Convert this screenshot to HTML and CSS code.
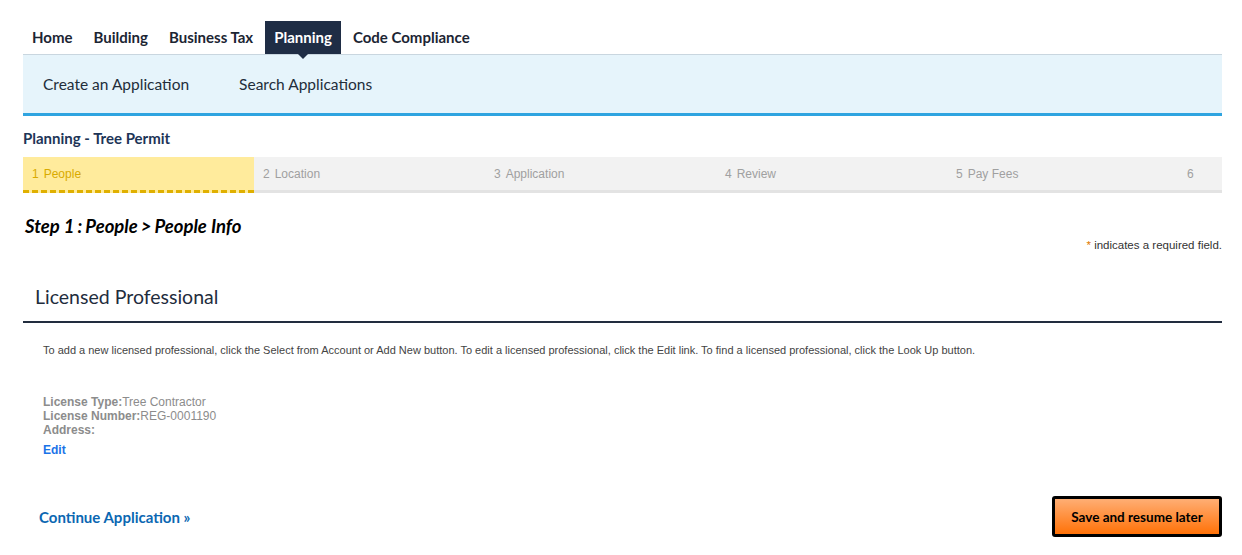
FILE: index.html
```html
<!DOCTYPE html>
<html lang="en">
<head>
  <meta charset="UTF-8" />
  <title>Planning - Tree Permit</title>
  <link rel="stylesheet" href="styles.css">
</head>
<body>
  <div class="page">

    <nav class="tabs">
      <a class="tab">Home</a>
      <a class="tab">Building</a>
      <a class="tab">Business Tax</a>
      <a class="tab active">Planning</a>
      <a class="tab">Code Compliance</a>
    </nav>

    <div class="submenu">
      <a>Create an Application</a>
      <a>Search Applications</a>
    </div>

    <h1 class="module-title">Planning - Tree Permit</h1>

    <ol class="steps">
      <li class="step current"><span>1</span>People</li>
      <li class="step"><span>2</span>Location</li>
      <li class="step"><span>3</span>Application</li>
      <li class="step"><span>4</span>Review</li>
      <li class="step"><span>5</span>Pay Fees</li>
      <li class="step last"><span>6</span></li>
    </ol>

    <h2 class="step-title">Step 1<span class="sep">:</span>People<span class="sep">&gt;</span>People Info</h2>
    <p class="required-note"><span class="star">*</span> indicates a required field.</p>

    <section class="section">
      <h3 class="section-title">Licensed Professional</h3>
      <p class="instructions">To add a new licensed professional, click the Select from Account or Add New button. To edit a licensed professional, click the Edit link. To find a licensed professional, click the Look Up button.</p>

      <div class="license">
        <div><b>License Type:</b>Tree Contractor</div>
        <div><b>License Number:</b>REG-0001190</div>
        <div><b>Address:</b></div>
      </div>
      <a class="edit-link">Edit</a>
    </section>

    <div class="actions">
      <a class="continue">Continue Application &raquo;</a>
      <button class="save-btn">Save and resume later</button>
    </div>

  </div>
</body>
</html>
```

FILE: styles.css
```css
body {
  margin: 0;
  background: #fff;
  font-family: Lato, "Open Sans", sans-serif;
  color: #222d3a;
}
.page {
  width: 1199px;
  margin-left: 23px;
}
.tabs {
  display: flex;
  margin-top: 21px;
  height: 33px;
}
.tab {
  display: flex;
  align-items: center;
  padding: 0 9px 2px 9px;
  margin-right: 3px;
  font-size: 15px;
  font-weight: bold;
  color: #1c2533;
  position: relative;
}
.tab.active {
  background: #1f2d45;
  color: #fff;
}
.tab.active::after {
  content: '';
  position: absolute;
  left: 50%;
  bottom: -5px;
  margin-left: -5px;
  border-left: 5px solid transparent;
  border-right: 5px solid transparent;
  border-top: 5px solid #1f2d45;
}
.submenu {
  display: flex;
  gap: 50px;
  align-items: center;
  height: 58px;
  padding-left: 20px;
  background: #e6f4fb;
  border-top: 1px solid #c9d6df;
  border-bottom: 3px solid #2fa4e0;
}
.submenu a {
  font-size: 15.5px;
  color: #222d3a;
}
.module-title {
  margin: 13px 0 10px 0;
  font-size: 15px;
  font-weight: bold;
  color: #1d3557;
}
.steps {
  display: flex;
  list-style: none;
  margin: 0;
  padding: 0;
  background: #f2f2f2;
  font-family: "Liberation Sans", Arial, sans-serif;
  font-size: 12px;
  color: #a0a0a0;
}
.step {
  width: 231px;
  height: 36px;
  line-height: 34px;
  padding-left: 9px;
  box-sizing: border-box;
  border-bottom: 3px solid #e3e3e3;
  flex-shrink: 0;
}
.step span {
  margin-right: 5px;
}
.step.current {
  background: #ffeb9c;
  color: #d9aa00;
  border-bottom: 3px dashed #e0b000;
}
.step.last {
  flex: 1;
  width: auto;
}
.step-title {
  margin: 22px 0 0 2px;
  font-size: 18.5px;
  font-weight: bold;
  font-style: italic;
  color: #000;
}
.step-title .sep {
  margin: 0 3px;
}
.required-note {
  margin: 2px 0 0 0;
  text-align: right;
  font-family: "Liberation Sans", Arial, sans-serif;
  font-size: 11.5px;
  color: #333;
}
.star {
  color: #e07800;
}
.section-title {
  margin: 34px 0 0 0;
  padding: 0 0 13px 12px;
  font-size: 19.5px;
  font-weight: normal;
  color: #1f2d3d;
  border-bottom: 2px solid #222d3f;
}
.instructions {
  margin: 21px 0 0 20px;
  font-family: "Liberation Sans", Arial, sans-serif;
  font-size: 11px;
  color: #444;
}
.license {
  margin: 39px 0 0 20px;
  font-family: "Liberation Sans", Arial, sans-serif;
  font-size: 12px;
  line-height: 14px;
  color: #8c8c8c;
}
.edit-link {
  display: block;
  margin: 6px 0 0 20px;
  font-family: "Liberation Sans", Arial, sans-serif;
  font-size: 12px;
  font-weight: bold;
  color: #1a73e8;
}
.actions {
  display: flex;
  justify-content: space-between;
  align-items: center;
  margin-top: 39px;
  padding-left: 16px;
}
.continue {
  font-size: 15px;
  font-weight: bold;
  color: #0b67b2;
}
.save-btn {
  width: 170px;
  height: 41px;
  border: 3px solid #000;
  border-radius: 3px;
  background: linear-gradient(#ffae74, #ff7208);
  font-family: Lato, sans-serif;
  font-size: 13.5px;
  font-weight: bold;
  color: #000;
  cursor: pointer;
}
```
